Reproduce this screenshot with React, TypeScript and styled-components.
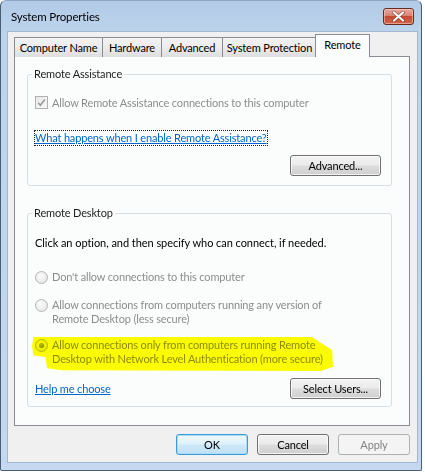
import React from "react";
import styled, { createGlobalStyle, css } from "styled-components";

const GlobalStyle = createGlobalStyle`
  html, body { margin: 0; padding: 0; background: #ffffff; }
  body {
    font-family: Lato, "Open Sans", "Noto Sans", sans-serif;
    font-size: 11px;
    letter-spacing: -0.15px;
    color: #000;
  }
  * { box-sizing: border-box; }
`;

const Window = styled.div`
  width: 422px;
  height: 471px;
  border: 1px solid #4b5d73;
  border-top-color: #8ea6c2;
  border-radius: 6px 6px 2px 2px;
  background: linear-gradient(180deg, #b2cae6 0px, #bcd3ec 30px, #c4d9ef 100%);
  display: flex;
  flex-direction: column;
  padding: 0 3px 7px 6px;
`;

const TitleBar = styled.div`
  height: 30px;
  display: flex;
  align-items: center;
  justify-content: space-between;
  padding-left: 4px;
`;

const Title = styled.span`
  font-size: 11.5px;
  color: #000;
`;

const CloseButton = styled.div`
  width: 31px;
  height: 17px;
  margin-right: 4px;
  border: 1px solid #6b2a21;
  border-radius: 3px;
  background: linear-gradient(180deg, #e5a99e 0%, #d88372 45%, #c64a33 50%, #d0664d 100%);
  box-shadow: inset 0 0 0 1px rgba(255, 220, 210, 0.5);
  display: flex;
  align-items: center;
  justify-content: center;
`;

const Client = styled.div`
  flex: 1;
  background: #f0f0f0;
  border: 1px solid #a3b7ce;
  padding: 2px 7px 6px 6px;
  display: flex;
  flex-direction: column;
`;

const TabStrip = styled.div`
  height: 23px;
  display: flex;
  align-items: flex-end;
  position: relative;
  z-index: 1;
  margin-bottom: -1px;
`;

const Tab = styled.div<{ $active?: boolean; $w: number }>`
  width: ${(p) => p.$w}px;
  height: 20px;
  line-height: 19px;
  text-align: center;
  border: 1px solid #898c95;
  border-bottom: none;
  margin-left: -1px;
  background: linear-gradient(180deg, #f3f3f3 0%, #ebebeb 50%, #dedede 100%);
  color: #000;
  white-space: nowrap;
  flex: none;
  &:first-child { margin-left: 0; }
  ${(p) =>
    p.$active &&
    css`
      height: 23px;
      line-height: 20px;
      margin-left: -2px;
      background: #fbfcfc;
      position: relative;
      z-index: 2;
    `}
`;

const Panel = styled.div`
  height: 370px;
  border: 1px solid #898c95;
  background: #fbfcfc;
  padding: 10px 17px 0 12px;
  display: flex;
  flex-direction: column;
`;

const GroupBox = styled.fieldset<{ $mt?: number; $pb: number }>`
  margin: ${(p) => p.$mt ?? 0}px 0 0 0;
  padding: 0 10px ${(p) => p.$pb}px 7px;
  border: 1px solid #d5dfe5;
  border-radius: 3px;
  display: flex;
  flex-direction: column;
  min-width: 0;
`;

const Legend = styled.legend`
  padding: 0 2px;
  margin-left: -3px;
  line-height: 14px;
  color: #1e1e1e;
`;

const CheckRow = styled.div`
  display: flex;
  align-items: center;
  gap: 4px;
  line-height: 15px;
  margin-top: 14px;
  color: #8d8d8d;
`;

const CheckBox = styled.span`
  width: 13px;
  height: 13px;
  border: 1px solid #b1b1b1;
  background: linear-gradient(135deg, #e9e9e9, #f8f8f8);
  display: inline-flex;
  align-items: center;
  justify-content: center;
  flex: none;
`;

const HelpLink = styled.a<{ $focused?: boolean; $mt?: number; $mb?: number }>`
  align-self: flex-start;
  color: #0066cc;
  text-decoration: underline;
  line-height: 14px;
  margin-top: ${(p) => p.$mt ?? 0}px;
  margin-bottom: ${(p) => p.$mb ?? 0}px;
  cursor: pointer;
  ${(p) =>
    p.$focused &&
    css`
      outline: 1px dotted #222;
      outline-offset: 0;
    `}
`;

const ButtonRow = styled.div<{ $mt: number; $between?: boolean }>`
  display: flex;
  align-items: flex-end;
  justify-content: ${(p) => (p.$between ? "space-between" : "flex-end")};
  margin-top: ${(p) => p.$mt}px;
  & > ${HelpLink} { align-self: flex-end; }
`;

const Button = styled.div<{ $w: number; $variant?: "primary" | "disabled" }>`
  width: ${(p) => p.$w}px;
  height: 21px;
  border: 1px solid #707070;
  border-radius: 3px;
  background: linear-gradient(180deg, #f2f2f2 0%, #ebebeb 48%, #dddddd 52%, #cfcfcf 100%);
  box-shadow: inset 0 0 0 1px rgba(255, 255, 255, 0.75);
  display: flex;
  align-items: center;
  justify-content: center;
  color: #000;
  flex: none;
  ${(p) =>
    p.$variant === "primary" &&
    css`
      border-color: #3c9ad8;
      background: linear-gradient(180deg, #eef8fe 0%, #e0f1fb 48%, #cde8f8 52%, #c0e1f4 100%);
      box-shadow: inset 0 0 0 1px #a9dcf6;
    `}
  ${(p) =>
    p.$variant === "disabled" &&
    css`
      border-color: #adb2b5;
      background: #f4f4f4;
      box-shadow: none;
      color: #838383;
    `}
`;

const Text = styled.div<{ $mt: number }>`
  margin-top: ${(p) => p.$mt}px;
  line-height: 14px;
  letter-spacing: -0.05px;
  color: #000;
`;

const RadioOption = styled.div<{ $mt: number }>`
  position: relative;
  display: flex;
  align-items: flex-start;
  gap: 4px;
  line-height: 14px;
  margin-top: ${(p) => p.$mt}px;
  color: #8d8d8d;
`;

const Radio = styled.span<{ $checked?: boolean }>`
  width: 13px;
  height: 13px;
  margin-top: 1px;
  border-radius: 50%;
  border: 1px solid #b4b4b4;
  background: radial-gradient(circle at 40% 35%, #fbfbfb 0%, #ececec 60%, #dedede 100%);
  display: inline-flex;
  align-items: center;
  justify-content: center;
  flex: none;
  ${(p) =>
    p.$checked &&
    css`
      &::after {
        content: "";
        width: 5px;
        height: 5px;
        border-radius: 50%;
        background: radial-gradient(circle at 40% 35%, #bdbdbd, #7e7e7e);
      }
    `}
`;

const Highlight = styled.div`
  position: absolute;
  left: -3px;
  top: -2px;
  width: 301px;
  height: 35px;
  background: #ffff00;
  mix-blend-mode: multiply;
  pointer-events: none;
  clip-path: polygon(
    0.5% 3%, 93% 3%, 96% 20%, 99.7% 40%, 100% 88%, 96% 100%,
    10% 98%, 5% 92%, 4.5% 60%, 0.5% 56%, 0% 30%
  );
`;

const DialogButtons = styled.div`
  display: flex;
  justify-content: flex-end;
  gap: 9px;
  margin-top: 8px;
`;

const tabs = [
  { label: "Computer Name", w: 89 },
  { label: "Hardware", w: 60 },
  { label: "Advanced", w: 62 },
  { label: "System Protection", w: 95 },
  { label: "Remote", w: 55, active: true },
];

export default function App() {
  return (
    <>
      <GlobalStyle />
      <Window>
        <TitleBar>
          <Title>System Properties</Title>
          <CloseButton>
            <svg width="13" height="11" viewBox="0 0 13 11">
              <path d="M2 1.5 L11 9.5 M11 1.5 L2 9.5" stroke="#5a1f16" strokeWidth="3.6" strokeLinecap="round" opacity="0.55" />
              <path d="M2 1.5 L11 9.5 M11 1.5 L2 9.5" stroke="#ffffff" strokeWidth="2.2" strokeLinecap="round" />
            </svg>
          </CloseButton>
        </TitleBar>
        <Client>
          <TabStrip>
            {tabs.map((t) => (
              <Tab key={t.label} $w={t.w} $active={t.active}>
                {t.label}
              </Tab>
            ))}
          </TabStrip>
          <Panel>
            <GroupBox $pb={9}>
              <Legend>Remote Assistance</Legend>
              <CheckRow>
                <CheckBox>
                  <svg width="9" height="9" viewBox="0 0 9 9">
                    <path d="M1.2 4.8 L3.4 7.2 L7.8 1.4" fill="none" stroke="#9b9b9b" strokeWidth="1.6" />
                  </svg>
                </CheckBox>
                Allow Remote Assistance connections to this computer
              </CheckRow>
              <HelpLink $focused $mt={21}>
                What happens when I enable Remote Assistance?
              </HelpLink>
              <ButtonRow $mt={10}>
                <Button $w={91}>Advanced...</Button>
              </ButtonRow>
            </GroupBox>
            <GroupBox $mt={20} $pb={7}>
              <Legend>Remote Desktop</Legend>
              <Text $mt={16}>Click an option, and then specify who can connect, if needed.</Text>
              <RadioOption $mt={20}>
                <Radio />
                <span>Don't allow connections to this computer</span>
              </RadioOption>
              <RadioOption $mt={14}>
                <Radio />
                <span>
                  Allow connections from computers running any version of
                  <br />
                  Remote Desktop (less secure)
                </span>
              </RadioOption>
              <RadioOption $mt={12}>
                <Radio $checked />
                <span>
                  Allow connections only from computers running Remote
                  <br />
                  Desktop with Network Level Authentication (more secure)
                </span>
                <Highlight />
              </RadioOption>
              <ButtonRow $mt={12} $between>
                <HelpLink $mb={3}>Help me choose</HelpLink>
                <Button $w={91}>Select Users...</Button>
              </ButtonRow>
            </GroupBox>
          </Panel>
          <DialogButtons>
            <Button $w={72} $variant="primary">OK</Button>
            <Button $w={72}>Cancel</Button>
            <Button $w={72} $variant="disabled">Apply</Button>
          </DialogButtons>
        </Client>
      </Window>
    </>
  );
}
